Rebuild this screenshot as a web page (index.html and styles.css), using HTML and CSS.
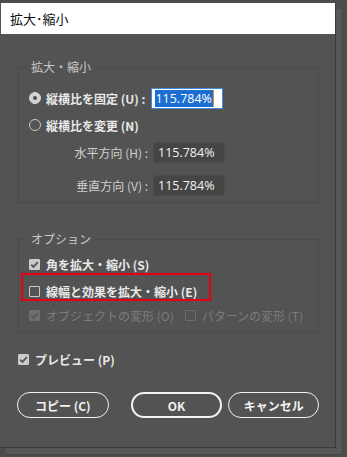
FILE: index.html
```html
<!DOCTYPE html>
<html lang="ja">
<head>
<meta charset="utf-8">
<link rel="stylesheet" href="styles.css">
</head>
<body>
<div class="dialog">
  <div class="titlebar">拡大･縮小</div>
  <div class="content">
    <fieldset class="group g1">
      <legend>拡大・縮小</legend>
      <div class="row">
        <span class="radio on"></span>
        <span class="label">縦横比を固定 (U) :</span>
        <span class="field active"><span class="sel">115.784%</span></span>
      </div>
      <div class="row r2">
        <span class="radio"></span>
        <span class="label">縦横比を変更 (N)</span>
      </div>
      <div class="row sub">
        <span class="sublabel">水平方向 (H) :</span>
        <span class="field">115.784%</span>
      </div>
      <div class="row sub s2">
        <span class="sublabel">垂直方向 (V) :</span>
        <span class="field">115.784%</span>
      </div>
    </fieldset>
    <fieldset class="group g2">
      <legend>オプション</legend>
      <div class="row c1">
        <span class="check on"><svg viewBox="0 0 11 11" width="11" height="11"><path d="M2.2 5.6 L4.5 7.9 L8.8 3.2" fill="none" stroke="#555" stroke-width="1.8"/></svg></span>
        <span class="label">角を拡大・縮小 (S)</span>
      </div>
      <div class="row c2">
        <span class="check"></span>
        <span class="label">線幅と効果を拡大・縮小 (E)</span>
        <span class="highlight"></span>
      </div>
      <div class="row c3 disabled">
        <span class="check on"><svg viewBox="0 0 11 11" width="11" height="11"><path d="M2.2 5.6 L4.5 7.9 L8.8 3.2" fill="none" stroke="#5a5a5a" stroke-width="1.8"/></svg></span>
        <span class="label">オブジェクトの変形 (O)</span>
        <span class="check second"></span>
        <span class="label">パターンの変形 (T)</span>
      </div>
    </fieldset>
    <div class="row preview">
      <span class="check on"><svg viewBox="0 0 11 11" width="11" height="11"><path d="M2.2 5.6 L4.5 7.9 L8.8 3.2" fill="none" stroke="#555" stroke-width="1.8"/></svg></span>
      <span class="label">プレビュー (P)</span>
    </div>
    <div class="buttons">
      <button class="btn copy">コピー (C)</button>
      <button class="btn ok">OK</button>
      <button class="btn cancel">キャンセル</button>
    </div>
  </div>
</div>
</body>
</html>
```
FILE: styles.css
```css
html, body {
  margin: 0;
  padding: 0;
}
body {
  width: 347px;
  height: 457px;
  background: #4c4c4c;
  font-family: "Noto Sans CJK JP", "Noto Sans", sans-serif;
  overflow: hidden;
}
.dialog {
  margin-top: 3px;
  width: 335px;
  height: 444px;
  background: #535353;
  border-right: 1px solid #3c3c3c;
  border-bottom: 1px solid #3c3c3c;
  box-shadow: 6px 6px 0 #575757, 7px 7px 0 #454545;
  display: flex;
  flex-direction: column;
}
.titlebar {
  height: 31px;
  margin-left: 1px;
  background: #ffffff;
  color: #111;
  font-size: 13px;
  line-height: 31px;
  padding-left: 9px;
}
.content {
  padding: 0 16px 0 18px;
  flex: 1;
}
.group {
  margin: 0;
  padding: 0 0 0 10px;
  border: 1px solid #4a4a4a;
  border-radius: 2px;
  min-width: 0;
}
.group legend {
  padding: 0 4px 0 4px;
  margin-left: -2px;
  color: #c8c8c8;
  font-size: 12px;
  line-height: 16px;
}
.g1 {
  margin-top: 25px;
  height: 142px;
}
.g2 {
  margin-top: 28px;
  height: 100px;
}
.row {
  display: flex;
  align-items: center;
  position: relative;
  height: 20px;
  color: #e8e8e8;
  font-size: 12px;
}
.label {
  white-space: nowrap;
  font-weight: bold;
}
.g1 .row:first-of-type {
  margin-top: 12px;
  height: 22px;
}
.r2 {
  margin-top: 6px;
}
.sub {
  height: 21px;
}
.sub:nth-of-type(3) { margin-top: 7px; }
.s2 { margin-top: 12px; }
.sublabel {
  width: 119px;
  text-align: right;
  padding-right: 5px;
  color: #cfcfcf;
  white-space: nowrap;
}
.radio {
  width: 10px;
  height: 10px;
  border-radius: 50%;
  border: 1px solid #c9c9c9;
  margin-right: 5px;
  margin-left: 0;
  box-sizing: content-box;
  flex: none;
}
.radio.on {
  background: #d4d4d4;
  border-color: #d4d4d4;
  position: relative;
}
.radio.on::after {
  content: "";
  position: absolute;
  left: 3px;
  top: 3px;
  width: 4px;
  height: 4px;
  border-radius: 50%;
  background: #505050;
}
.field {
  margin-left: 6px;
  width: 72px;
  height: 21px;
  box-sizing: border-box;
  background: #454545;
  border: 1px solid #4c4c4c;
  border-radius: 2px;
  color: #f2f2f2;
  font-family: "Open Sans", "Noto Sans", sans-serif;
  font-size: 12.5px;
  line-height: 19px;
  padding-left: 4px;
}
.sub .field {
  margin-left: 0;
}
.field.active {
  margin-left: 6px;
  background: #ffffff;
  border: 1px solid #3e8be0;
  border-radius: 1px;
  padding-left: 3px;
}
.sel {
  background: #1b6fd3;
  color: #ffffff;
  display: inline-block;
  line-height: 17px;
  padding-right: 1px;
  border-right: 1px solid #e08a2c;
}
.check {
  width: 11px;
  height: 11px;
  box-sizing: border-box;
  border: 1px solid #c9c9c9;
  border-radius: 1px;
  margin-right: 6px;
  flex: none;
  display: flex;
}
.check.on {
  background: #cbcbcb;
  border-color: #cbcbcb;
}
.check svg {
  margin: -1px;
}
.c1 {
  margin-top: 7px;
}
.c2 {
  margin-top: 7px;
}
.highlight {
  position: absolute;
  left: -8px;
  top: -8px;
  width: 190px;
  height: 28px;
  border: 2px solid #e60012;
  box-sizing: border-box;
}
.c3 {
  margin-top: 4px;
  color: #7c7c7c;
}
.c3 .label {
  font-weight: normal;
}
.c3 .check {
  border-color: #6d6d6d;
}
.c3 .check.on {
  background: #6f6f6f;
  border-color: #6f6f6f;
}
.c3 .check.second {
  margin-left: 11px;
}
.preview {
  margin-top: 16px;
}
.preview .check {
  margin-right: 6px;
}
.buttons {
  display: flex;
  margin-top: 23px;
  margin-left: -1px;
}
.btn {
  height: 26px;
  box-sizing: border-box;
  border: 1.5px solid #f2f2f2;
  border-radius: 13px;
  background: transparent;
  color: #f2f2f2;
  font-family: "Noto Sans CJK JP", "Noto Sans", sans-serif;
  font-size: 12px;
  font-weight: bold;
  padding: 0;
}
.copy { width: 92px; }
.ok { width: 92px; margin-left: 22px; border-width: 2px; }
.cancel { width: 91px; margin-left: 6px; }
```
